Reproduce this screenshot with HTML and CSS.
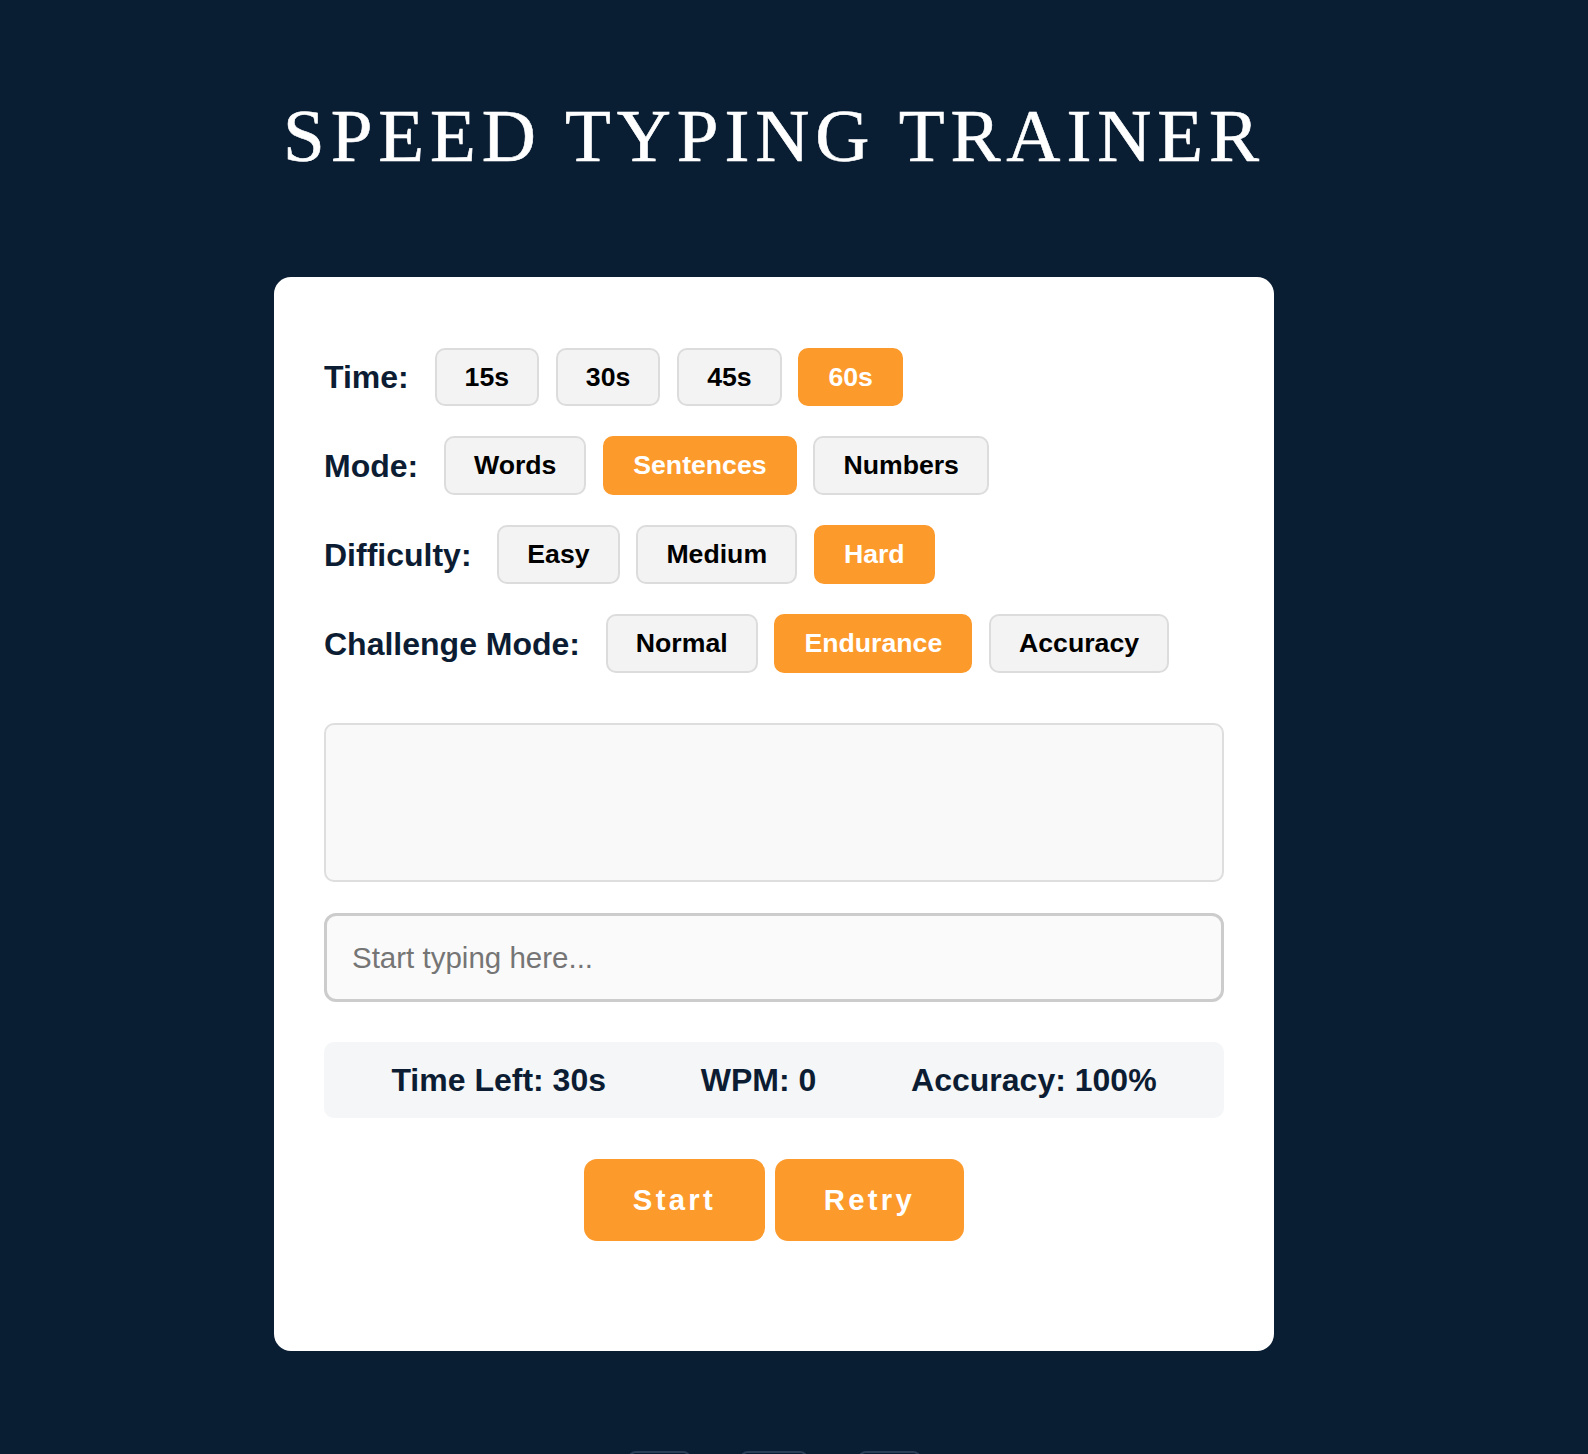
FILE: index.html
```html
<!DOCTYPE html>
<html lang="en">
<head>
<meta charset="utf-8">
<title>Speed Typing Trainer</title>
<link rel="stylesheet" href="styles.css">
</head>
<body>
<div class="page">
  <h1 class="title">Speed Typing Trainer</h1>
  <div class="card">
    <div class="options">
      <div class="option-row">
        <span class="opt-label">Time:</span>
        <button class="opt">15s</button>
        <button class="opt">30s</button>
        <button class="opt">45s</button>
        <button class="opt active">60s</button>
      </div>
      <div class="option-row">
        <span class="opt-label">Mode:</span>
        <button class="opt">Words</button>
        <button class="opt active">Sentences</button>
        <button class="opt">Numbers</button>
      </div>
      <div class="option-row">
        <span class="opt-label">Difficulty:</span>
        <button class="opt">Easy</button>
        <button class="opt">Medium</button>
        <button class="opt active">Hard</button>
      </div>
      <div class="option-row">
        <span class="opt-label">Challenge Mode:</span>
        <button class="opt">Normal</button>
        <button class="opt active">Endurance</button>
        <button class="opt">Accuracy</button>
      </div>
    </div>
    <div class="display"></div>
    <input class="typing" type="text" placeholder="Start typing here...">
    <div class="stats">
      <span>Time Left: 30s</span>
      <span>WPM: 0</span>
      <span>Accuracy: 100%</span>
    </div>
    <div class="actions">
      <button class="action">Start</button>
      <button class="action">Retry</button>
    </div>
  </div>
  <div class="footer">
    <span class="fbtn narrow"></span>
    <span class="fbtn wide"></span>
    <span class="fbtn narrow"></span>
  </div>
</div>
</body>
</html>
```

FILE: styles.css
```css
html, body {
  margin: 0;
  padding: 0;
  background: #091d33;
}

body {
  height: 1454px;
  overflow: hidden;
  font-family: "Liberation Sans", Arial, sans-serif;
}

.page {
  width: 1548px;
  display: flex;
  flex-direction: column;
  align-items: center;
}

.title {
  margin: 98px 0 0;
  font-family: "Liberation Serif", "Times New Roman", serif;
  font-weight: normal;
  font-size: 75px;
  line-height: 75px;
  letter-spacing: 5.9px;
  text-transform: uppercase;
  color: #ffffff;
  -webkit-text-stroke: 0.6px #ffffff;
}

.card {
  box-sizing: border-box;
  width: 1000px;
  margin-top: 104px;
  padding: 70.5px 50px 110.3px;
  background: #ffffff;
  border-radius: 17px;
}

.options {
  display: flex;
  flex-direction: column;
  gap: 30.7px;
}

.option-row {
  display: flex;
  align-items: center;
  gap: 16.8px;
}

.opt-label {
  font-size: 32px;
  font-weight: bold;
  color: #0c1d33;
  margin-right: 9px;
  line-height: 36px;
}

.opt {
  font-family: "Liberation Sans", Arial, sans-serif;
  font-size: 26.67px;
  font-weight: bold;
  line-height: 30.3px;
  padding: 12px 28px;
  border: 2px solid #dcdcdc;
  background: #f3f3f3;
  color: #000000;
  border-radius: 10px;
  margin: 0;
}

.opt.active {
  background: #fc9a2c;
  border-color: #fc9a2c;
  color: #ffffff;
}

.display {
  box-sizing: border-box;
  margin-top: 50.6px;
  height: 159px;
  background: #f9f9f9;
  border: 2px solid #dedede;
  border-radius: 10px;
}

.typing {
  display: block;
  box-sizing: border-box;
  width: 100%;
  margin-top: 31px;
  height: 88.4px;
  padding: 0 25px;
  font-family: "Liberation Sans", Arial, sans-serif;
  font-size: 29.5px;
  background: #fafafa;
  border: 3px solid #cccccc;
  border-radius: 12px;
  color: #222222;
  outline: none;
}

.typing::placeholder {
  color: #757575;
}

.stats {
  margin-top: 40.6px;
  display: flex;
  justify-content: space-around;
  padding: 20px;
  background: #f5f6f7;
  border-radius: 10px;
  font-size: 32px;
  font-weight: bold;
  line-height: 36px;
  color: #0c1d33;
}

.actions {
  margin-top: 41px;
  display: flex;
  justify-content: center;
  gap: 10.5px;
}

.action {
  font-family: "Liberation Sans", Arial, sans-serif;
  font-size: 29.3px;
  font-weight: bold;
  letter-spacing: 3.33px;
  line-height: 33.4px;
  padding: 24px 48.5px;
  border: 0;
  border-radius: 13px;
  background: #fc9a2c;
  color: #ffffff;
  margin: 0;
}

.footer {
  margin-top: 100px;
  display: flex;
  justify-content: center;
  gap: 49.5px;
}

.fbtn {
  box-sizing: border-box;
  height: 40px;
  border: 2px solid #2b3e57;
  border-radius: 8px;
}

.fbtn.narrow {
  width: 63px;
}

.fbtn.wide {
  width: 68px;
}
```
